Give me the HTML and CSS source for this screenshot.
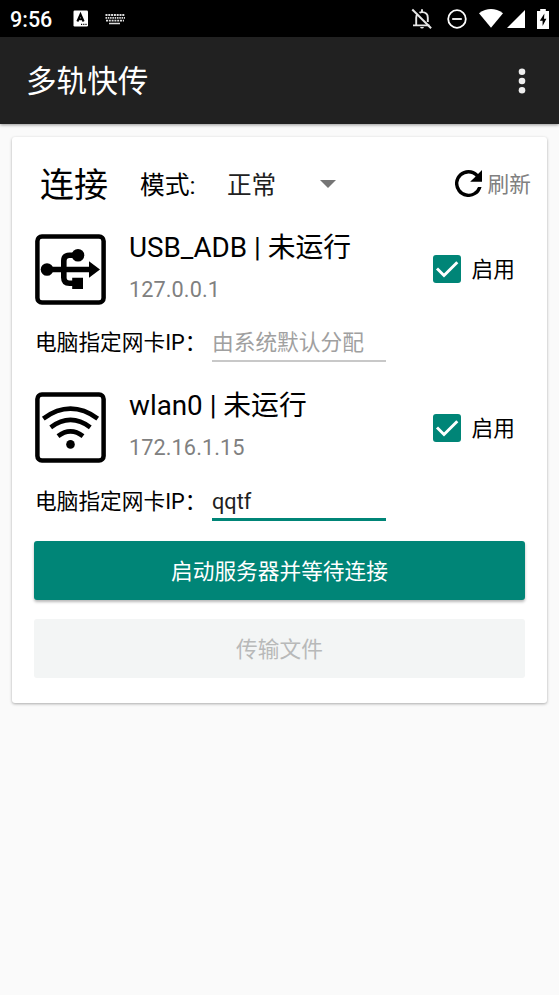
FILE: index.html
```html
<!DOCTYPE html>
<html lang="zh-CN">
<head>
<meta charset="utf-8">
<title>多轨快传</title>
<link rel="stylesheet" href="styles.css">
</head>
<body>
<header class="status">
  <span class="clock">9:56</span>
  <svg class="s-input" width="16" height="17" viewBox="0 0 16 17"><rect x="0.5" y="0.5" width="14.5" height="16" rx="1.2" fill="#fff"/><path d="M4.4 11.5 7.5 4.3 10.6 11.5M5.5 9.3h4" fill="none" stroke="#000" stroke-width="2.1"/><path d="M8 14.4h1.2m1 0h1.2m1 0h1.2" stroke="#000" stroke-width="1.2"/></svg>
  <svg class="s-keys" width="20" height="12" viewBox="0 0 20 12" fill="none" stroke="#ddd"><path d="M.5 2H20M1 7.6H19" stroke-width="1.8" stroke-dasharray="2 .8"/><path d="M.5 4.8H20" stroke-width="1.8" stroke-dasharray="1.5 .8"/><path d="M4 10.5h11" stroke-width="1.5"/></svg>
  <span class="grow"></span>
  <svg class="s-bell" width="22" height="22" viewBox="0 0 22 22" fill="none" stroke="#e8e8e8" stroke-width="1.9"><path d="M2 17.4h16.5M5.2 17V9.7q0-2.2 1.4-3.7M8.5 4.8q1-.7 2.5-.7c3.7 0 5.8 2.4 5.8 5.6v4.4M11 1.2v3"/><path d="M9 19h4q-.5 1.5-2 1.5T9 19Z" fill="#e8e8e8" stroke="none"/><path d="m1.3 1.5 18.8 18.8" stroke-width="2"/></svg>
  <svg class="s-dnd" width="20" height="20" viewBox="0 0 20 20" fill="none" stroke="#fff" stroke-width="1.8"><circle cx="10" cy="10" r="8.8"/><path d="M5.2 10h9.6"/></svg>
  <svg class="s-wifi" width="24" height="19" viewBox="0 0 24 19"><path d="M0 4.2Q12-4.1 24 4.2L12 18.8Z" fill="#fff"/></svg>
  <svg class="s-cell" width="18" height="18" viewBox="0 0 18 18"><path d="M18 0v18H0Z" fill="#fff"/></svg>
  <svg class="s-batt" width="12" height="20" viewBox="0 0 12 20"><path d="M3.2 0h5.6v2H12v18H0V2h3.2Z" fill="#fff"/><path d="M7.4 4.5 2.8 11.8H5.6V17L9.4 9.7H7Z" fill="#000"/></svg>
</header>
<div class="appbar">
  <h1>多轨快传</h1>
  <svg width="8" height="26" viewBox="0 0 8 26" fill="#eee"><circle cx="4" cy="3.7" r="3.3"/><circle cx="4" cy="13" r="3.3"/><circle cx="4" cy="22.3" r="3.3"/></svg>
</div>
<main class="card">
  <div class="head">
    <h2>连接</h2>
    <span class="mode">模式:</span>
    <span class="select">正常</span>
    <svg class="caret" width="16" height="8" viewBox="0 0 16 8"><path d="M0 0h16L8 8Z" fill="#757575"/></svg>
    <span class="grow"></span>
    <svg class="refresh" width="27" height="27" viewBox="4 4 16 16"><path d="M17.65 6.35A7.96 7.96 0 0 0 12 4a8 8 0 1 0 7.73 10h-2.08A6 6 0 1 1 12 6c1.66 0 3.14.69 4.22 1.78L13 11h7V4z"/></svg>
    <span class="refresh-text">刷新</span>
  </div>
  <section class="device">
    <div class="main">
      <svg class="icon" width="71" height="71" viewBox="0 0 71 71"><rect x="2.4" y="2.4" width="66.2" height="66.2" rx="4.5" fill="none" stroke="#000" stroke-width="4.5"/><path d="M11 35.5h46M43 21.3h-8.5q-5.7 0-5.7 5.7v16.5q0 5.7 5.7 5.7H41" fill="none" stroke="#000" stroke-width="5.6"/><circle cx="12" cy="35.5" r="6.3"/><circle cx="43" cy="21.3" r="6.3"/><path d="M37.2 43.8H48v11.2H37.2ZM54 27.2l11 8.3-11 8.3Z"/></svg>
      <div class="info"><div class="name">USB_ADB | 未运行</div><div class="addr">127.0.0.1</div></div>
      <span class="box"><svg width="28" height="28" viewBox="0 0 28 28"><path d="m4 13.5 7 7L24.3 7.2" fill="none" stroke="#fff" stroke-width="2.9"/></svg></span>
      <span class="enable">启用</span>
    </div>
    <div class="assign"><span class="label">电脑指定网卡IP：</span><span class="field hint">由系统默认分配</span></div>
  </section>
  <section class="device">
    <div class="main">
      <svg class="icon" width="71" height="71" viewBox="0 0 71 71"><rect x="2.4" y="2.4" width="66.2" height="66.2" rx="4.5" fill="none" stroke="#000" stroke-width="4.5"/><path d="M8.3 26.6Q35.5 6.8 62.7 26.6M15.7 35.3Q35.5 20.5 55.3 35.3M23 44.1Q35.5 34.5 48 44.1" fill="none" stroke="#000" stroke-width="4.6"/><circle cx="35.5" cy="52.4" r="4.3"/></svg>
      <div class="info"><div class="name">wlan0 | 未运行</div><div class="addr">172.16.1.15</div></div>
      <span class="box"><svg width="28" height="28" viewBox="0 0 28 28"><path d="m4 13.5 7 7L24.3 7.2" fill="none" stroke="#fff" stroke-width="2.9"/></svg></span>
      <span class="enable">启用</span>
    </div>
    <div class="assign"><span class="label">电脑指定网卡IP：</span><span class="field focus">qqtf</span></div>
  </section>
  <button class="btn primary">启动服务器并等待连接</button>
  <button class="btn" disabled>传输文件</button>
</main>
</body>
</html>
```
FILE: styles.css
```css
* { box-sizing: border-box; }
body {
  margin: 0;
  height: 995px;
  overflow: hidden;
  background: #fafafa;
  color: #000;
  font-family: Roboto, "Noto Sans CJK SC", sans-serif;
  font-size: 21.7px;
  white-space: nowrap;
}
svg { display: block; flex: none; }
h1, h2 { margin: 0; font-weight: 400; }
.grow { flex: 1; }

.status {
  display: flex;
  align-items: center;
  height: 37px;
  padding: 0 10px;
  background: #000;
  color: #fff;
}
.clock { width: 62.5px; font-size: 21.5px; font-weight: 500; line-height: 36px; padding-top: 2px; }
.s-keys { margin-left: 16px; }
.s-dnd { margin-left: 14px; }
.s-bell { margin-top: 1px; }
.s-wifi { margin-left: 12px; }
.s-cell { margin: 1px 0 0 4px; }
.s-batt { margin-left: 12px; }

.appbar {
  display: flex;
  align-items: center;
  justify-content: space-between;
  height: 87px;
  padding: 0 33px 0 26px;
  background: #212121;
  color: #fff;
  box-shadow: 0 1px 3px rgba(0, 0, 0, .4);
}
.appbar h1 { padding-top: 2px; font-size: 30.6px; line-height: 85px; }

.card {
  margin: 13px 12px 0;
  height: 566px;
  padding: 0 22px;
  border-radius: 3px;
  background: #fff;
  box-shadow: 0 1px 3px rgba(0, 0, 0, .32);
}
.head { display: flex; align-items: center; height: 94px; margin-right: -6px; padding-left: 6px; }
.head h2, .mode, .select { padding-bottom: 3px; }
.head h2 { width: 100px; font-size: 34px; }
.mode { width: 87px; font-size: 24.8px; }
.select { width: 93px; font-size: 24.6px; color: #212121; }
.refresh { margin: 0 6px 2px 0; }
.refresh-text { padding-bottom: 4px; color: #808080; }

.device { height: 158.6px; }
.main { display: flex; align-items: center; height: 76px; }
.icon { margin-left: 1px; }
.info { flex: 1; margin-left: 23px; padding-bottom: 1px; }
.name { font-size: 27.8px; line-height: 42px; }
.addr { line-height: 42px; letter-spacing: .08px; color: #808080; }
.box { flex: none; width: 28px; height: 28px; border-radius: 3px; background: #008577; }
.enable { margin: 0 10px 0 11px; padding-bottom: 3px; }
.assign { display: flex; align-items: flex-start; padding: 1px 0 0 1px; }
.label { width: 177px; line-height: 70px; }
.field { width: 174px; height: 54px; line-height: 70px; border-bottom: 2px solid #c8c8c8; }
.hint { color: #a0a0a0; }
.focus { border-bottom: 3px solid #008577; color: #212121; }

.btn {
  display: block;
  width: 100%;
  height: 59px;
  margin: 0 0 19px;
  padding: 2px 0 0;
  border: 0;
  border-radius: 3px;
  background: #f3f5f5;
  color: #b8b9b9;
  font: inherit;
  line-height: 57px;
}
.btn.primary {
  margin-top: -7px;
  background: #008577;
  color: #fff;
  box-shadow: 0 2px 3px rgba(0, 0, 0, .28);
}
```
